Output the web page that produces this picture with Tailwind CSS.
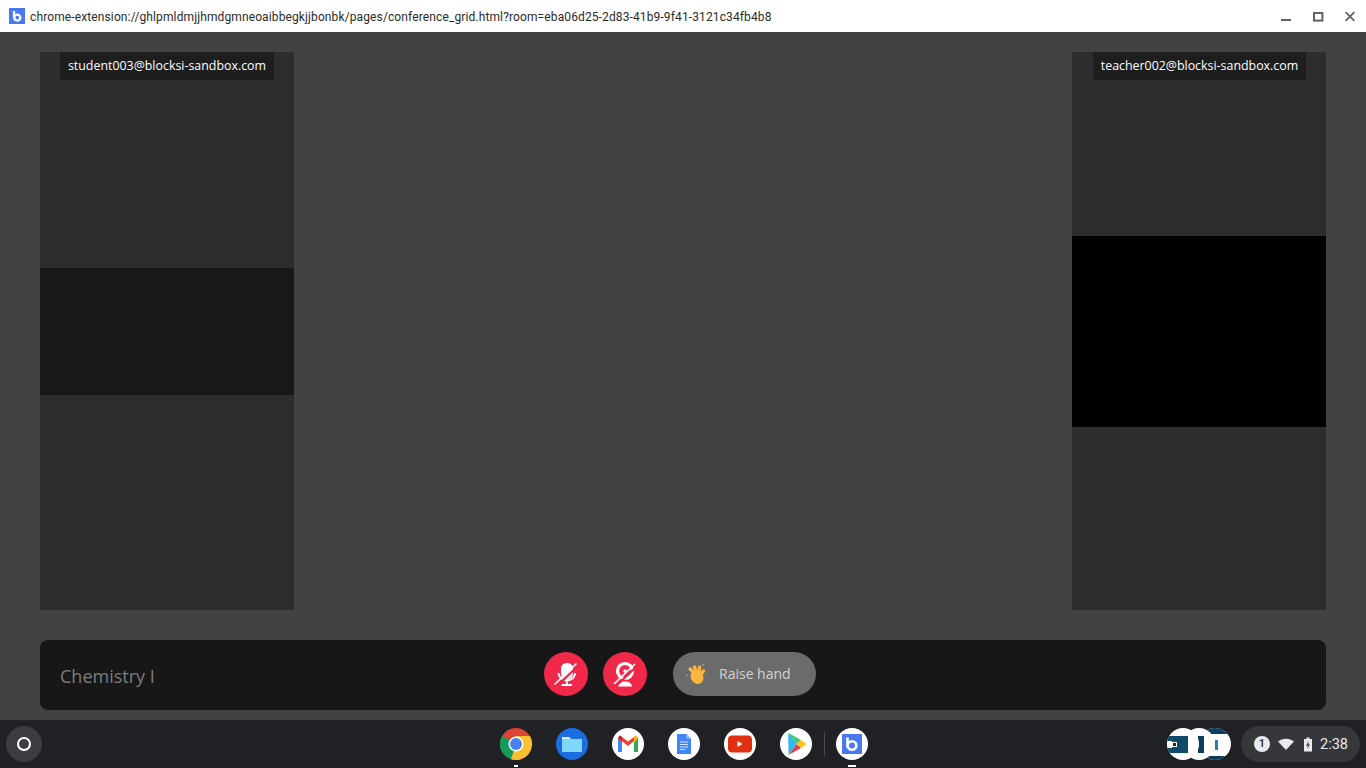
<!DOCTYPE html>
<html><head><meta charset="utf-8"><script src="https://cdn.jsdelivr.net/npm/@tailwindcss/browser@4"></script></head>
<body class="m-0 overflow-hidden">
<div class="w-[1366px] h-[768px] flex flex-col bg-[#424242] font-['Open_Sans',sans-serif] overflow-hidden">
  <!-- title bar -->
  <div class="h-8 bg-white flex items-center shrink-0 pl-[9px]">
    <svg class="w-4 h-4 shrink-0" viewBox="0 0 16 16"><rect width="16" height="16" fill="#4a78ee"/><path d="M5 3v7" stroke="#fff" stroke-width="2.2" fill="none"/><circle cx="8.3" cy="9.6" r="3" stroke="#fff" stroke-width="2.2" fill="none"/></svg>
    <div class="ml-[5px] pt-[2px] font-['Roboto',sans-serif] text-[12px] leading-4 text-[#2b2b2b] tracking-[0.12px] whitespace-nowrap">chrome-extension://ghlpmldmjjhmdgmneoaibbegkjjbonbk/pages/conference_grid.html?room=eba06d25-2d83-41b9-9f41-3121c34fb4b8</div>
    <div class="ml-auto flex items-center">
      <svg class="w-8 h-8" viewBox="0 0 32 32"><rect x="11" y="19" width="10" height="2" fill="#5f6368"/></svg>
      <svg class="w-8 h-8" viewBox="0 0 32 32"><rect x="12" y="13" width="8.4" height="7.600" fill="none" stroke="#5f6368" stroke-width="2"/></svg>
      <svg class="w-8 h-8" viewBox="0 0 32 32"><path d="M11.6 12.1l8.8 8.8M20.4 12.1l-8.8 8.8" stroke="#5f6368" stroke-width="1.8"/></svg>
    </div>
  </div>
  <!-- main -->
  <div class="flex-1 flex flex-col px-10 pt-5 pb-[10px]">
    <div class="h-[558px] flex justify-between shrink-0">
      <div class="relative w-[254px] bg-[#2d2d2d] flex flex-col justify-start">
        <div class="h-[216px] shrink-0"></div>
        <div class="h-[127px] shrink-0 bg-[#181818]"></div>
        <div class="absolute top-0 left-5 h-7 w-[214px] bg-[#1e1e1e] text-white text-[12.4px] leading-[27px] text-center whitespace-nowrap">student003@blocksi-sandbox.com</div>
      </div>
      <div class="relative w-[254px] bg-[#2d2d2d] flex flex-col">
        <div class="h-[184px] shrink-0"></div>
        <div class="h-[191px] shrink-0 bg-black"></div>
        <div class="absolute top-0 left-[21px] h-7 w-[213px] bg-[#1e1e1e] text-white text-[12.4px] leading-[27px] text-center whitespace-nowrap">teacher002@blocksi-sandbox.com</div>
      </div>
    </div>
    <div class="mt-[30px] h-[70px] shrink-0 rounded-lg bg-[#171717] flex items-center pl-5">
      <div class="w-[484px] text-[18px] leading-6 text-[#7d7d7d] pt-[2px]">Chemistry I</div>
      <div class="flex items-center -mt-[2px]">
        <div class="w-11 h-11 rounded-full bg-[#f02849] flex items-center justify-center">
          <svg class="w-8 h-8" viewBox="0 0 32 32" fill="none"><rect x="11" y="5" width="12" height="16" rx="5.500" fill="#fff"/><path d="M8.500 15a8.300 7.500 0 0 0 16.600 0M16.800 21v5M11.500 27h10.500" stroke="#fff" stroke-width="1.900"/><path d="M7 28L28.500 7.500" stroke="#f02849" stroke-width="2.400"/><path d="M4.500 26.500L26.500 5.500" stroke="#fff" stroke-width="1.700"/></svg>
        </div>
        <div class="w-11 h-11 rounded-full bg-[#f02849] flex items-center justify-center ml-[15px]">
          <svg class="w-8 h-8" viewBox="0 0 32 32" fill="none"><circle cx="16" cy="13" r="7.500" stroke="#fff" stroke-width="3.200"/><circle cx="16" cy="13" r="1.800" fill="#fff"/><path d="M9 28.500c.5-3.500 3-5 7-5s6.500 1.500 7 5z" fill="#fff"/><path d="M7.500 27.500L27 9" stroke="#f02849" stroke-width="2.400"/><path d="M5 26L26 6" stroke="#fff" stroke-width="1.700"/></svg>
        </div>
        <div class="w-[143px] h-11 rounded-full bg-[#6b6b6b] flex items-center ml-[26px] pl-3">
          <svg class="w-6 h-6" viewBox="0 0 24 24" fill="none"><g stroke="#f8b53f" stroke-width="3.400" stroke-linecap="round"><path d="M11 13L5.200 7M12 12L9.500 5M14 11.500L14.500 5.200M15.500 13L18.500 9"/></g><ellipse cx="12" cy="15" rx="6.200" ry="7.200" transform="rotate(-30 12 15)" fill="#f8b53f"/><path d="M1.200 14l1.500-1.500M17.500 2.200l1.500 1.500" stroke="#d5d5d5" stroke-width=".9"/></svg>
          <span class="ml-[10px] text-[14px] leading-5 text-[#d2d2d2]">Raise hand</span>
        </div>
      </div>
    </div>
  </div>
  <!-- shelf -->
  <div class="h-12 shrink-0 bg-[#202124] flex items-center">
    <div class="ml-[6px] w-9 h-9 rounded-full bg-[#3c3d40] flex items-center justify-center shrink-0">
      <div class="w-[14px] h-[14px] rounded-full border-2 border-white"></div>
    </div>
    <div class="ml-[458px] flex items-center gap-6">
      <div class="relative w-8 h-8">
        <svg class="w-8 h-8" viewBox="0 0 32 32"><circle cx="16" cy="16" r="16" fill="#db4437"/><path d="M16 16L2.100 8A16 16 0 0 0 11 31.200L16 16z" fill="#0f9d58"/><path d="M16 8h13.900A16 16 0 0 1 11 31.200L16 16z" fill="#fbc02d"/><circle cx="16" cy="16" r="7.500" fill="#fff"/><circle cx="16" cy="16" r="6" fill="#4a80ef"/></svg>
        <div class="absolute left-[14px] top-[37px] w-1 h-[2px] bg-white"></div>
      </div>
      <svg class="w-8 h-8" viewBox="0 0 32 32"><circle cx="16" cy="16" r="16" fill="#1a6fe0"/><path d="M6 9h7l2 2h11v13H6z" fill="#7fd8fb"/><path d="M6 9h7l2 2H6z" fill="#d5f2fc"/></svg>
      <svg class="w-8 h-8" viewBox="0 0 32 32"><circle cx="16" cy="16" r="16" fill="#fff"/><path d="M6 10v14h4V14z" fill="#4285f4"/><path d="M22 14v10h4V10z" fill="#34a853"/><path d="M6 10l10 8 10-8-2-2.500-8 6-8-6z" fill="#ea4335"/><path d="M26 10l-2-2.500-2 1.500v5z" fill="#fbbc04"/><path d="M6 10l2-2.500 2 1.500v5z" fill="#c5221f"/></svg>
      <svg class="w-8 h-8" viewBox="0 0 32 32"><circle cx="16" cy="16" r="16" fill="#fff"/><path d="M9 6h9.500L23 10.500V26H9z" fill="#4285f4"/><path d="M18.500 6L23 10.500h-4.500z" fill="#a1c2fa"/><path d="M12 14h8M12 16.500h8M12 19h8M12 21.500h5" stroke="#d6e4fc" stroke-width="1.100"/></svg>
      <svg class="w-8 h-8" viewBox="0 0 32 32"><circle cx="16" cy="16" r="16" fill="#fff"/><rect x="4" y="7.500" width="24" height="17" rx="4" fill="#e1300f"/><path d="M13.500 13v6l5-3z" fill="#fff"/></svg>
      <svg class="w-8 h-8" viewBox="0 0 32 32"><circle cx="16" cy="16" r="16" fill="#fff"/><path d="M8.500 5v12l7-1z" fill="#3fc3f0"/><path d="M8.500 5l12.500 7-4.500 4z" fill="#46c77b"/><path d="M8.500 27l12.500-7-4.500-4z" fill="#e5404c"/><path d="M8.500 5v22l8-11z" fill="#35b6ee"/><path d="M21 12l5.500 4-5.500 4-4.500-4z" fill="#fcc21a"/></svg>
      <div class="w-px h-6 bg-[#4a4b4e] -mx-[12px]"></div>
      <div class="relative w-8 h-8 -ml-px">
        <svg class="w-8 h-8" viewBox="0 0 32 32"><circle cx="16" cy="16" r="16" fill="#fff"/><rect x="6" y="6" width="20" height="20" fill="#4a78ee"/><path d="M11.500 9.500v10" stroke="#fff" stroke-width="2.600" fill="none"/><circle cx="16" cy="17.500" r="4.300" stroke="#fff" stroke-width="2.600" fill="none"/></svg>
        <div class="absolute left-3 top-[37px] w-2 h-[2px] bg-white"></div>
      </div>
    </div>
    <!-- tray pods -->
    <div class="ml-auto flex items-center">
      <div class="relative z-30 w-8 h-8 rounded-full bg-white overflow-hidden flex flex-col justify-center">
        <div class="w-[21px] h-[17px] bg-[#0f4a6b] flex items-center">
          <div class="w-[5px] h-[7px] bg-white"></div>
          <div class="w-[5px] h-[5px] bg-[#1a2a35] border border-white"></div>
        </div>
      </div>
      <div class="relative z-20 -ml-4 w-8 h-8 rounded-full bg-white overflow-hidden flex items-center justify-center">
        <div class="w-[6px] h-[17px] bg-[#0e3e5e] ml-[3px]"></div>
      </div>
      <div class="relative z-10 -ml-4 w-8 h-8 rounded-full bg-white overflow-hidden flex flex-col justify-between">
        <div class="h-[6px] bg-[#0e3e5e]"></div>
        <div class="w-[3px] h-[10px] bg-[#2a7fb0] ml-[16px]"></div>
        <div class="h-1 bg-[#0e3e5e]"></div>
      </div>
    </div>
    <div class="ml-[10px] mr-[6px] w-[119px] h-9 rounded-full bg-[#36373a] flex items-center pl-[13px] shrink-0">
      <div class="w-4 h-4 rounded-full bg-[#e8eaed] text-[#202124] text-[11px] leading-4 text-center font-['Roboto',sans-serif] font-medium">1</div>
      <svg class="w-4 h-4 ml-2" viewBox="0 0 16 16"><path d="M0 5.500C2 3.800 5 2.700 8 2.700s6 1.100 8 2.800L8 14z" fill="#e8eaed"/></svg>
      <svg class="w-4 h-4 ml-[6px]" viewBox="0 0 16 16"><path d="M6.500 1.500h3V3H12v12.500H4V3h2.500z" fill="#e8eaed"/><path d="M8.800 5L6 9.500h1.700L7.200 13l2.800-4.500H8.300z" fill="#36373a"/></svg>
      <span class="ml-1 pt-px text-[14.5px] leading-5 text-[#e8eaed] font-['Roboto',sans-serif]">2:38</span>
    </div>
  </div>
</div>
</body></html>
